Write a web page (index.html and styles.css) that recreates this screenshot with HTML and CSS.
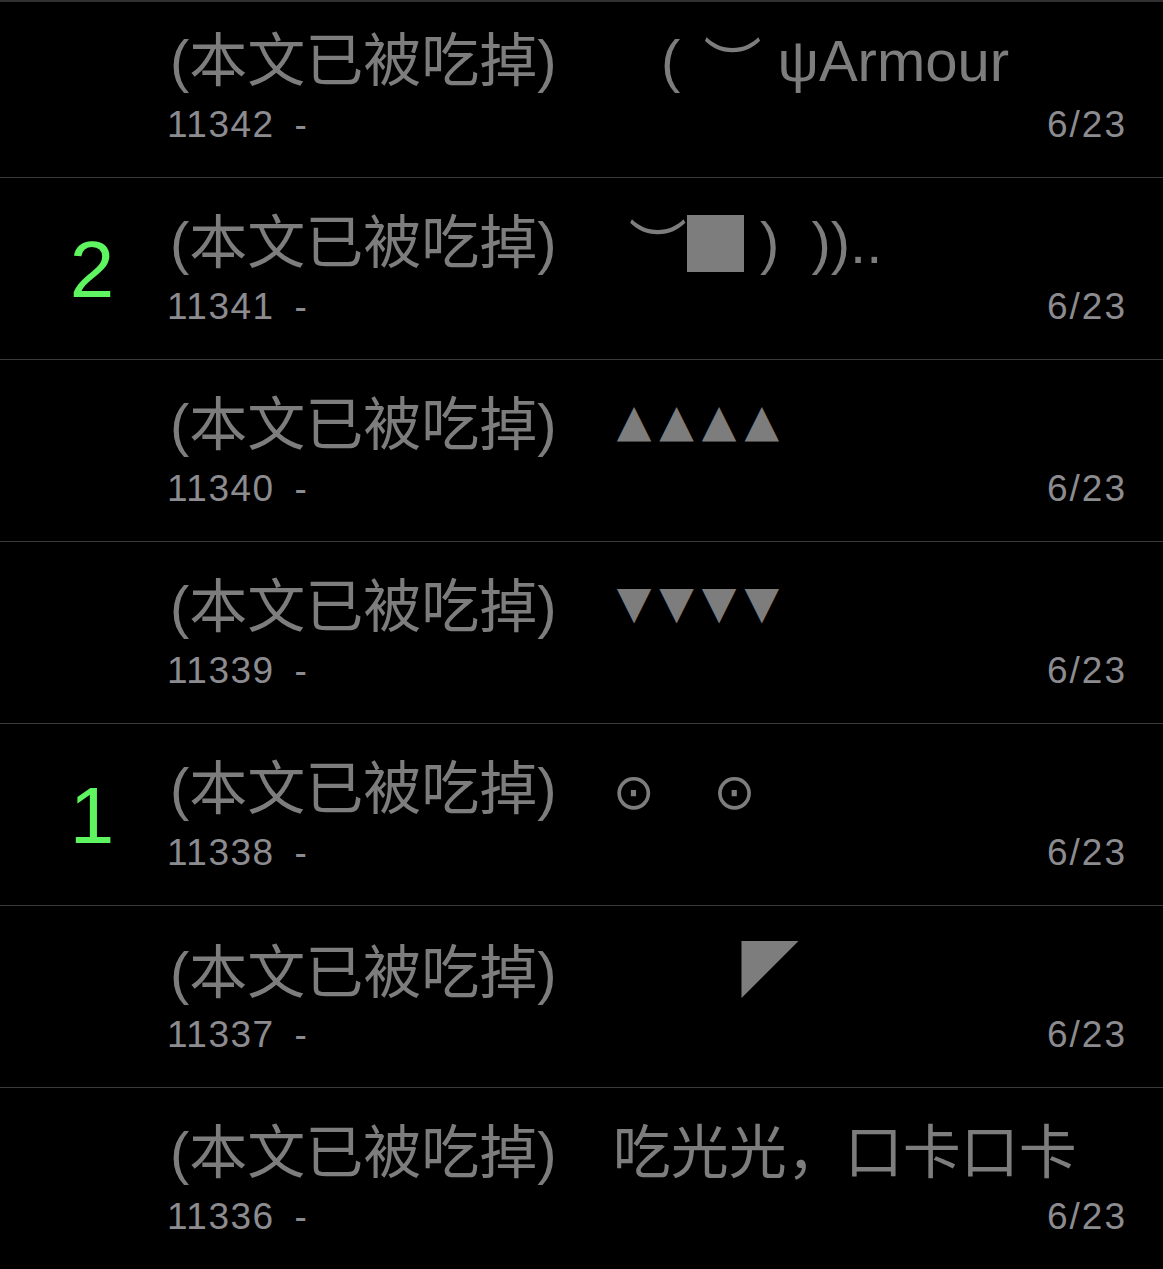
FILE: index.html
```html
<!DOCTYPE html>
<html lang="zh">
<head>
<meta charset="utf-8">
<title>列表</title>
<link rel="stylesheet" href="styles.css">
</head>
<body>
<div class="topbar"></div>
<ul class="list">
  <li class="row">
    <div class="rank"></div>
    <div class="main">
      <div class="title"><span class="head">(本文已被吃掉)</span><span class="tail">   ( <span class="arc">︶</span> ψArmour</span></div>
      <div class="meta"><span class="id">11342 -</span><span class="date">6/23</span></div>
    </div>
  </li>
  <li class="row">
    <div class="rank">2</div>
    <div class="main">
      <div class="title"><span class="head">(本文已被吃掉)</span><span class="tail"> <span class="arc arc-tight">︶</span><span class="blk"></span> )  )).. </span></div>
      <div class="meta"><span class="id">11341 -</span><span class="date">6/23</span></div>
    </div>
  </li>
  <li class="row">
    <div class="rank"></div>
    <div class="main">
      <div class="title"><span class="head">(本文已被吃掉)</span><span class="tail"><span class="tri">▲▲▲▲</span></span></div>
      <div class="meta"><span class="id">11340 -</span><span class="date">6/23</span></div>
    </div>
  </li>
  <li class="row">
    <div class="rank"></div>
    <div class="main">
      <div class="title"><span class="head">(本文已被吃掉)</span><span class="tail"><span class="tri">▼▼▼▼</span></span></div>
      <div class="meta"><span class="id">11339 -</span><span class="date">6/23</span></div>
    </div>
  </li>
  <li class="row">
    <div class="rank">1</div>
    <div class="main">
      <div class="title"><span class="head">(本文已被吃掉)</span><span class="tail"><span class="eye">⊙</span><span class="eye-gap"></span><span class="eye">⊙</span></span></div>
      <div class="meta"><span class="id">11338 -</span><span class="date">6/23</span></div>
    </div>
  </li>
  <li class="row">
    <div class="rank"></div>
    <div class="main">
      <div class="title"><span class="head">(本文已被吃掉)</span><span class="tail">        <span class="corner">◤</span></span></div>
      <div class="meta"><span class="id">11337 -</span><span class="date">6/23</span></div>
    </div>
  </li>
  <li class="row">
    <div class="rank"></div>
    <div class="main">
      <div class="title"><span class="head">(本文已被吃掉)</span><span class="tail">吃光光，口卡口卡</span></div>
      <div class="meta"><span class="id">11336 -</span><span class="date">6/23</span></div>
    </div>
  </li>
</ul>
</body>
</html>
```
FILE: styles.css
```css
html, body {
  margin: 0;
  padding: 0;
  background: #000;
}

body {
  width: 1163px;
  height: 1269px;
  overflow: hidden;
  position: relative;
  font-family: "Liberation Sans", "Noto Sans CJK SC", sans-serif;
}

.topbar {
  position: absolute;
  top: 0;
  left: 0;
  right: 0;
  height: 2px;
  background: #303032;
  z-index: 2;
}

.list {
  list-style: none;
  margin: -4px 0 0 0;
  padding: 0;
}

.row {
  display: flex;
  align-items: stretch;
  height: 181px;
  border-bottom: 1px solid #3a3a3c;
}

.rank {
  width: 170px;
  flex: none;
  box-sizing: border-box;
  padding-left: 14px;
  padding-top: 2px;
  display: flex;
  align-items: center;
  justify-content: center;
  font-size: 80px;
  line-height: 80px;
  color: #5ef560;
}

.main {
  flex: 1;
  min-width: 0;
  padding-top: 31px;
}

.title {
  height: 68px;
  line-height: 68px;
  font-size: 58px;
  color: #7d7d7d;
  white-space: pre;
}

.tail {
  margin-left: 56px;
}

.arc {
  display: inline-block;
  margin-left: 7px;
  vertical-align: -5px;
  line-height: 58px;
}

.arc-tight {
  margin-left: 0;
}

.blk {
  display: inline-block;
  width: 57px;
  height: 57px;
  background: #7d7d7d;
  vertical-align: -9px;
}

.tri {
  display: inline-block;
  margin-left: 4px;
  font-family: "DejaVu Sans", sans-serif;
  font-size: 45px;
  letter-spacing: 8px;
  vertical-align: 9px;
  line-height: 45px;
}

.eye {
  font-family: "DejaVu Sans", sans-serif;
  font-size: 50px;
}

.eye-gap {
  display: inline-block;
  width: 59px;
}

.corner {
  display: inline-block;
  font-family: "Noto Sans CJK SC", sans-serif;
  font-size: 57px;
  line-height: 58px;
  vertical-align: 2px;
}

.meta {
  display: flex;
  justify-content: space-between;
  align-items: baseline;
  margin-top: 8px;
  height: 44px;
  line-height: 44px;
  font-size: 37px;
  color: #8c8c90;
  padding-right: 36px;
  letter-spacing: 2px;
}

.id {
  margin-left: -3px;
  white-space: pre;
  letter-spacing: 1.5px;
  word-spacing: 8px;
}
```
